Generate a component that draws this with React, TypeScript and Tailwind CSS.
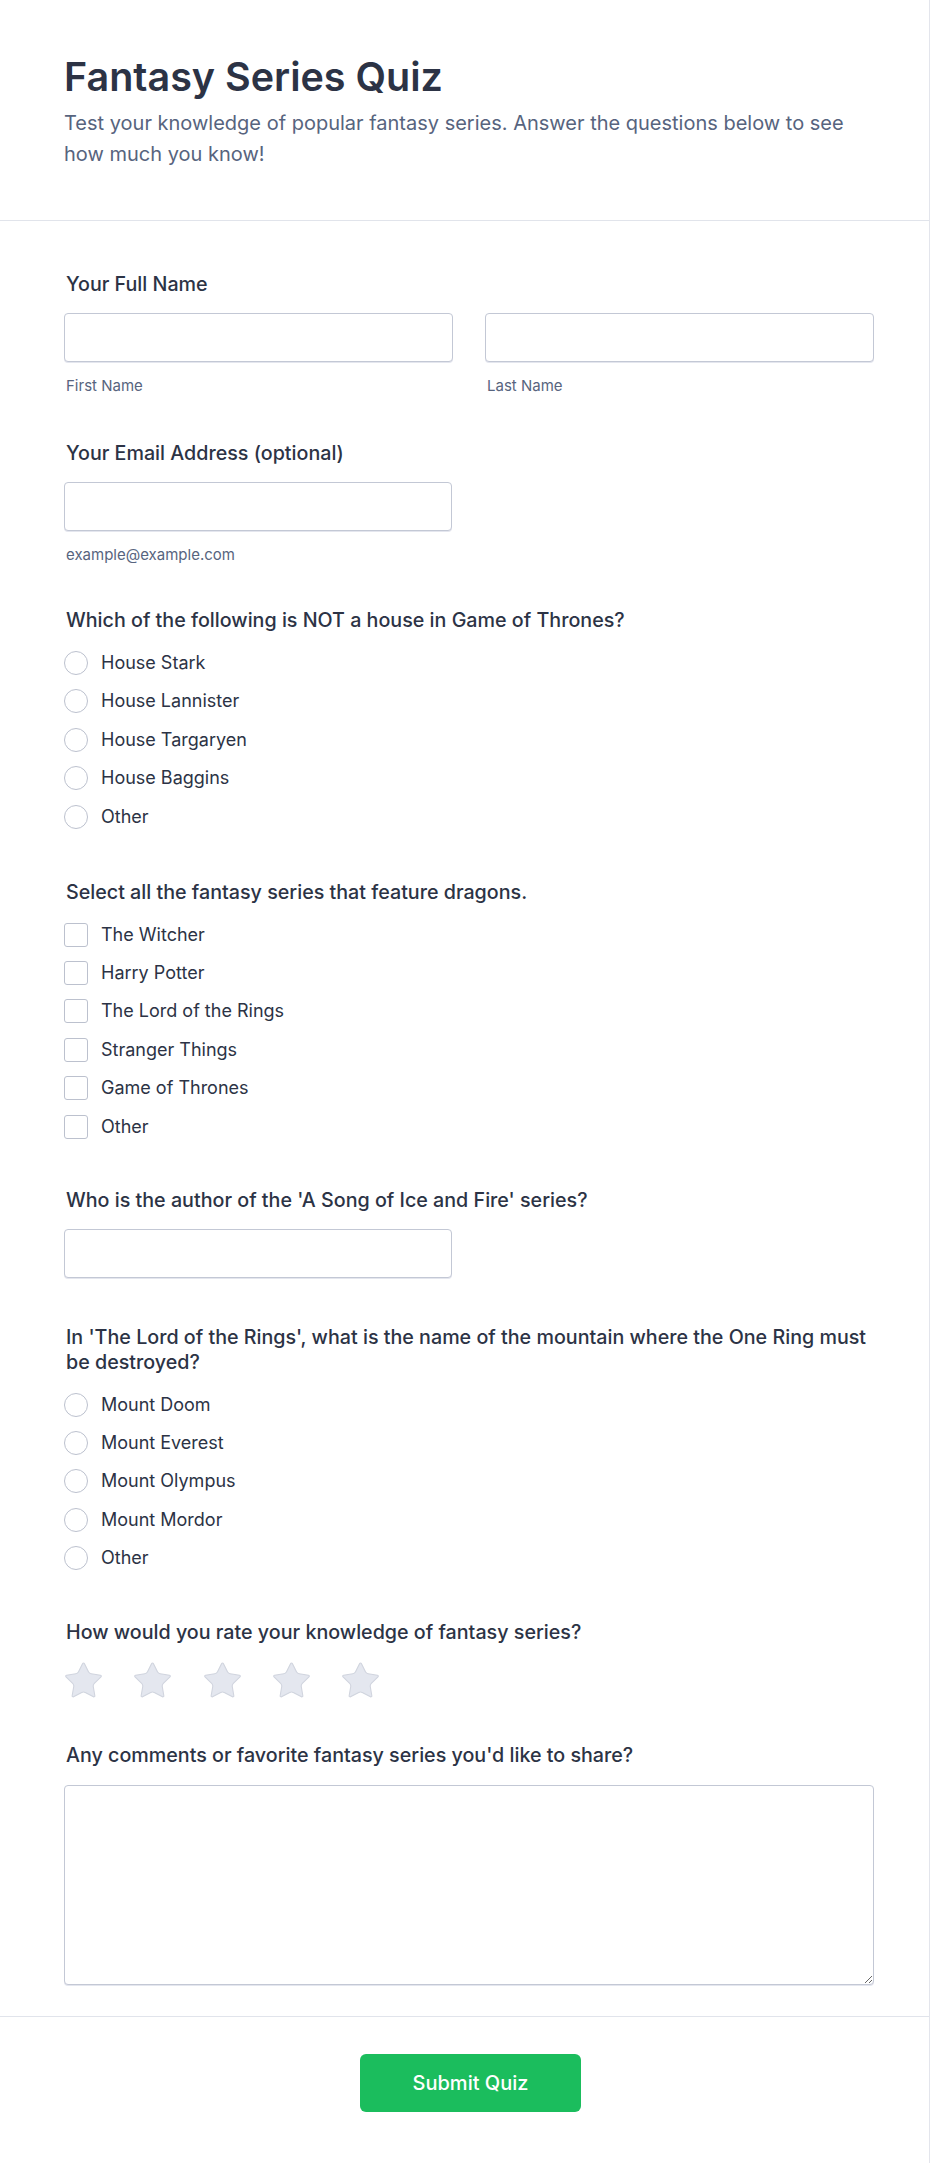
import { ReactNode } from 'react';

const houses = ['House Stark', 'House Lannister', 'House Targaryen', 'House Baggins', 'Other'];
const series = [
  'The Witcher',
  'Harry Potter',
  'The Lord of the Rings',
  'Stranger Things',
  'Game of Thrones',
  'Other',
];
const mountains = ['Mount Doom', 'Mount Everest', 'Mount Olympus', 'Mount Mordor', 'Other'];

function Label({ children }: { children: ReactNode }) {
  return (
    <label className="block pl-0.5 text-[19.7px] font-medium leading-[25px] text-[#2c3345]">
      {children}
    </label>
  );
}

function Sublabel({ children }: { children: ReactNode }) {
  return <span className="mt-[14px] block pl-0.5 text-[15px] leading-5 text-[#57647e]">{children}</span>;
}

function TextInput({ className = '' }: { className?: string }) {
  return (
    <input
      type="text"
      className={`block h-[49px] rounded-[4px] border border-[#c3c8d5] bg-white px-3 text-base text-[#2c3345] shadow-[0_1px_0_#e4e6ee] outline-none ${className}`}
    />
  );
}

function Options({ items, kind }: { items: string[]; kind: 'radio' | 'checkbox' }) {
  return (
    <div className="mt-4 flex flex-col gap-[10.4px]">
      {items.map((item) => (
        <label key={item} className="flex h-7 items-center gap-[13px] text-lg leading-7 text-[#2c3345]">
          <span
            className={`block h-6 w-6 shrink-0 border border-[#bcc1ce] bg-white ${
              kind === 'radio' ? 'rounded-full' : 'rounded-[3px]'
            }`}
          />
          <span>{item}</span>
        </label>
      ))}
    </div>
  );
}

function Star() {
  return (
    <svg width="37" height="36" viewBox="1.6 1.6 20.8 20" className="block shrink-0">
      <path
        d="M11.525 2.295a.53.53 0 0 1 .95 0l2.31 4.679a2.123 2.123 0 0 0 1.595 1.16l5.166.756a.53.53 0 0 1 .294.904l-3.736 3.638a2.123 2.123 0 0 0-.611 1.878l.882 5.14a.53.53 0 0 1-.771.56l-4.618-2.428a2.122 2.122 0 0 0-1.973 0L6.396 21.01a.53.53 0 0 1-.77-.56l.881-5.139a2.122 2.122 0 0 0-.611-1.879L2.16 9.795a.53.53 0 0 1 .294-.906l5.165-.755a2.122 2.122 0 0 0 1.597-1.16z"
        fill="#e4e7ef"
        stroke="#d0d4de"
        strokeWidth="0.6"
        strokeLinejoin="round"
      />
    </svg>
  );
}

export default function App() {
  return (
    <div className="min-h-screen w-full border-r border-[#e3e5ec] bg-white font-['Inter','Noto_Sans',sans-serif]">
      <header className="border-b border-[#e1e4eb] pb-[50px] pl-16 pr-[55px] pt-[57px]">
        <h1 className="text-[39.5px] font-semibold leading-10 text-[#2c3345]">Fantasy Series Quiz</h1>
        <p className="mt-[11px] text-xl leading-[31px] text-[#57647e]">
          Test your knowledge of popular fantasy series. Answer the questions below to see how much you
          know!
        </p>
      </header>

      <form className="pb-[31px] pl-16 pr-[55px] pt-[51px]" onSubmit={(e) => e.preventDefault()}>
        <div>
          <Label>Your Full Name</Label>
          <div className="mt-4 grid grid-cols-2 gap-8">
            <div>
              <TextInput className="w-full" />
              <Sublabel>First Name</Sublabel>
            </div>
            <div>
              <TextInput className="w-full" />
              <Sublabel>Last Name</Sublabel>
            </div>
          </div>
        </div>

        <div className="mt-[45px]">
          <Label>Your Email Address (optional)</Label>
          <TextInput className="mt-4 w-[388px]" />
          <Sublabel>example@example.com</Sublabel>
        </div>

        <div className="mt-[43px]">
          <Label>Which of the following is NOT a house in Game of Thrones?</Label>
          <Options items={houses} kind="radio" />
        </div>

        <div className="mt-[49px]">
          <Label>Select all the fantasy series that feature dragons.</Label>
          <Options items={series} kind="checkbox" />
        </div>

        <div className="mt-[47px]">
          <Label>Who is the author of the 'A Song of Ice and Fire' series?</Label>
          <TextInput className="mt-4 w-[388px]" />
        </div>

        <div className="mt-[47px]">
          <Label>
            In 'The Lord of the Rings', what is the name of the mountain where the One Ring must be
            destroyed?
          </Label>
          <Options items={mountains} kind="radio" />
        </div>

        <div className="mt-[48px]">
          <Label>How would you rate your knowledge of fantasy series?</Label>
          <div className="mt-[17px] flex gap-[32.3px] pl-px">
            {[1, 2, 3, 4, 5].map((n) => (
              <Star key={n} />
            ))}
          </div>
        </div>

        <div className="mt-[45px]">
          <Label>Any comments or favorite fantasy series you'd like to share?</Label>
          <textarea className="mt-[17px] block h-[200px] w-full resize-y rounded-[4px] border border-[#c3c8d5] bg-white px-3 py-2 text-base text-[#2c3345] shadow-[0_1px_0_#e4e6ee] outline-none" />
        </div>
      </form>

      <footer className="border-t border-[#e1e4eb] pb-[50px] pl-16 pr-[55px] pt-[37px]">
        <div className="flex justify-center">
          <button
            type="submit"
            className="ml-[3px] rounded-md bg-[#1bbd5d] px-[53px] py-[15px] text-xl font-medium leading-7 text-white"
          >
            Submit Quiz
          </button>
        </div>
      </footer>
    </div>
  );
}
